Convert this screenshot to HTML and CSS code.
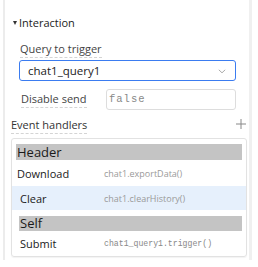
FILE: index.html
```html
<!DOCTYPE html>
<html>
<head>
<meta charset="utf-8">
<link rel="stylesheet" href="styles.css">
</head>
<body>
<div class="page">
  <div class="rail-left"></div>
  <div class="panel">
    <div class="section-title"><span class="caret"></span>Interaction</div>
    <div class="field-label"><span class="dashed">Query to trigger</span></div>
    <div class="select">
      <span class="select-value">chat1_query1</span>
      <svg class="chevron" width="8" height="5" viewBox="0 0 8 5"><path d="M0.8 0.8 L4 3.8 L7.2 0.8" fill="none" stroke="#aaa" stroke-width="1"/></svg>
    </div>
    <div class="row-field">
      <span class="dashed row-label">Disable send</span>
      <div class="input">false</div>
    </div>
    <div class="handlers-head">
      <span class="dashed">Event handlers</span>
      <svg class="plus" width="10" height="10" viewBox="0 0 10 10"><path d="M5 0 V10 M0 5 H10" stroke="#888" stroke-width="1"/></svg>
    </div>
    <div class="list">
      <div class="group group-header"><div class="group-bar">Header</div></div>
      <div class="item item-download"><span class="item-name">Download</span><span class="item-fn">chat1.exportData()</span></div>
      <div class="item item-active"><span class="item-name">Clear</span><span class="item-fn">chat1.clearHistory()</span></div>
      <div class="group group-self"><div class="group-bar">Self</div></div>
      <div class="item item-submit"><span class="item-name">Submit</span><span class="item-fn mono">chat1_query1.trigger()</span></div>
    </div>
  </div>
  <div class="rail-right"></div>
</div>
</body>
</html>
```
FILE: styles.css
```css
html, body {
  margin: 0;
  padding: 0;
  background: #fff;
}
body {
  font-family: "Open Sans", "Noto Sans", sans-serif;
  font-size: 11px;
  color: #222;
}
.page {
  display: flex;
  height: 260px;
}
.rail-left {
  width: 2px;
  margin-left: 3px;
  background: #ececec;
}
.panel {
  width: 244px;
  display: flex;
  flex-direction: column;
}
.rail-right {
  width: 3px;
  background: #f0f0f0;
}
.section-title {
  margin-top: 15px;
  height: 15px;
  line-height: 15px;
  padding-left: 8px;
  display: flex;
  align-items: center;
  color: #222;
}
.caret {
  width: 0;
  height: 0;
  border-left: 2.5px solid transparent;
  border-right: 2.5px solid transparent;
  border-top: 4px solid #333;
  margin-right: 2px;
}
.dashed {
  border-bottom: 1px dashed #d4d4d4;
  padding-bottom: 1px;
}
.field-label {
  margin-top: 11px;
  padding-left: 15px;
  height: 15px;
  line-height: 15px;
  color: #444;
}
.select {
  margin: 4px 13px 0 14px;
  height: 19px;
  border: 1.5px solid #3b7cf0;
  border-radius: 3px;
  display: flex;
  align-items: center;
  justify-content: space-between;
  padding: 0 9px 0 8px;
  font-size: 11.5px;
}
.chevron {
  margin-top: 1px;
}
.row-field {
  margin: 8px 13px 0 16px;
  display: flex;
  align-items: center;
  justify-content: space-between;
}
.row-label {
  color: #444;
}
.input {
  width: 126px;
  height: 19px;
  line-height: 19px;
  border: 1px solid #ddd;
  border-radius: 3px;
  padding-left: 2px;
  font-family: "Liberation Mono", "DejaVu Sans Mono", monospace;
  font-size: 10.5px;
  letter-spacing: 1px;
  color: #888;
}
.handlers-head {
  margin: 7px 5px 0 6px;
  height: 16px;
  display: flex;
  align-items: center;
  justify-content: space-between;
  color: #333;
}
.plus {
  margin-top: -3px;
  margin-right: -2px;
}
.list {
  margin: 5px 2px 0 6px;
  border: 1px solid #e2e2e2;
  border-radius: 3px;
  padding: 5px 0 0;
  box-shadow: 0 1px 1px rgba(0,0,0,0.05);
}
.group {
  padding: 0 4px 0 4px;
}
.group-self {
  margin-top: 6px;
  padding-left: 7px;
}
.group-bar {
  background: #c4c4c4;
  height: 16px;
  line-height: 16px;
  font-size: 13px;
  padding-left: 1px;
  color: #1a1a1a;
}
.group-self .group-bar {
  height: 15px;
  line-height: 15px;
}
.item {
  height: 24px;
  display: flex;
  align-items: center;
  padding-left: 8px;
}
.item-download {
  padding-left: 5px;
  height: 26px;
}
.item-submit {
  height: 25px;
}
.item-active {
  background: #e6f0fc;
}
.item-name {
  width: 84px;
  color: #1a1a1a;
}
.item-download .item-name {
  width: 87px;
}
.item-fn {
  font-size: 9px;
  color: #9a9a9a;
}
.item-fn.mono {
  font-family: "Liberation Mono", "DejaVu Sans Mono", monospace;
  font-size: 8.2px;
  color: #888;
}
```
